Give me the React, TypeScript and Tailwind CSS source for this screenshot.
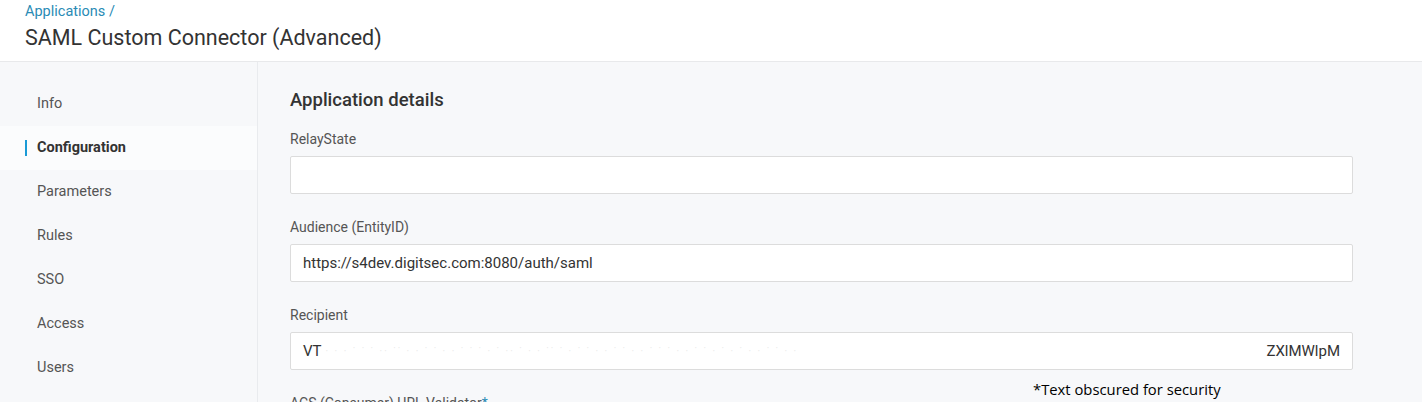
const navItems = ['Info', 'Configuration', 'Parameters', 'Rules', 'SSO', 'Access', 'Users'];

function Field({ label, children }: { label: string; children?: React.ReactNode }) {
  return (
    <div className="mb-[24px]">
      <div className="text-[14px] leading-[18px] text-[#555] mb-[8px]">{label}</div>
      <div className="h-[38px] bg-white border border-[#dcdcdc] rounded-[2px] px-[12px] flex items-center text-[15px] text-[#333]">
        {children}
      </div>
    </div>
  );
}

export default function App() {
  return (
    <div className="w-[1422px] h-[402px] overflow-hidden bg-[#f7f8fa] font-['Roboto',sans-serif] relative">
      {/* Header */}
      <header className="h-[62px] bg-white border-b border-[#e8e9eb] pl-[25px]">
        <div className="text-[14.5px] leading-[22px] pt-[1px] text-[#2a8bb5]">Applications /</div>
        <h1 className="text-[21.5px] leading-[30px] text-[#333]">SAML Custom Connector (Advanced)</h1>
      </header>

      <div className="flex">
        {/* Sidebar */}
        <nav className="w-[258px] shrink-0 border-r border-[#e9ebee] pt-[20px] h-[340px]">
          {navItems.map((item) => {
            const active = item === 'Configuration';
            return (
              <div
                key={item}
                className={`h-[44px] flex items-center pl-[25px] text-[14.5px] ${active ? 'bg-[#fbfcfd] font-bold text-[#333]' : 'text-[#555]'}`}
              >
                <span className={`w-[2px] h-[16px] mr-[10px] ${active ? 'bg-[#1a9ad6]' : ''}`} />
                {item}
              </div>
            );
          })}
        </nav>

        {/* Main */}
        <main className="flex-1 pl-[32px] pr-[69px] pt-[27px]">
          <h2 className="text-[18.5px] leading-[22px] font-medium text-[#333] mb-[19px]">Application details</h2>
          <Field label="RelayState" />
          <Field label="Audience (EntityID)">https://s4dev.digitsec.com:8080/auth/saml</Field>
          <Field label="Recipient">
            <div className="w-full flex justify-between items-center">
              <span>VT</span>
              <span className="text-[#c8c8c8] tracking-[2px] text-[10px] flex-1 px-[4px] overflow-hidden whitespace-nowrap opacity-40">
                · · · ˙ ˙ ˙ ·· ˙˙ · · ˙ ˙ · · ˙ ˙ ˙ · ˙ ·· ˙ · · ˙˙ ˙ · ˙ ˙ · · ˙ ˙ · · ˙ ˙ ˙ · · ˙ ˙ · ˙ · ˙ · · ˙ ˙ · ·
              </span>
              <span>ZXlMWlpM</span>
            </div>
          </Field>
          <div className="text-[14px] leading-[18px] text-[#555]">
            ACS (Consumer) URL Validator<span className="text-[#2a8bb5]">*</span>
          </div>
        </main>
      </div>

      <div className="absolute left-[1033px] top-[379px] text-[14.8px] leading-[20px] text-black font-['Open_Sans',sans-serif]">
        *Text obscured for security
      </div>
    </div>
  );
}
